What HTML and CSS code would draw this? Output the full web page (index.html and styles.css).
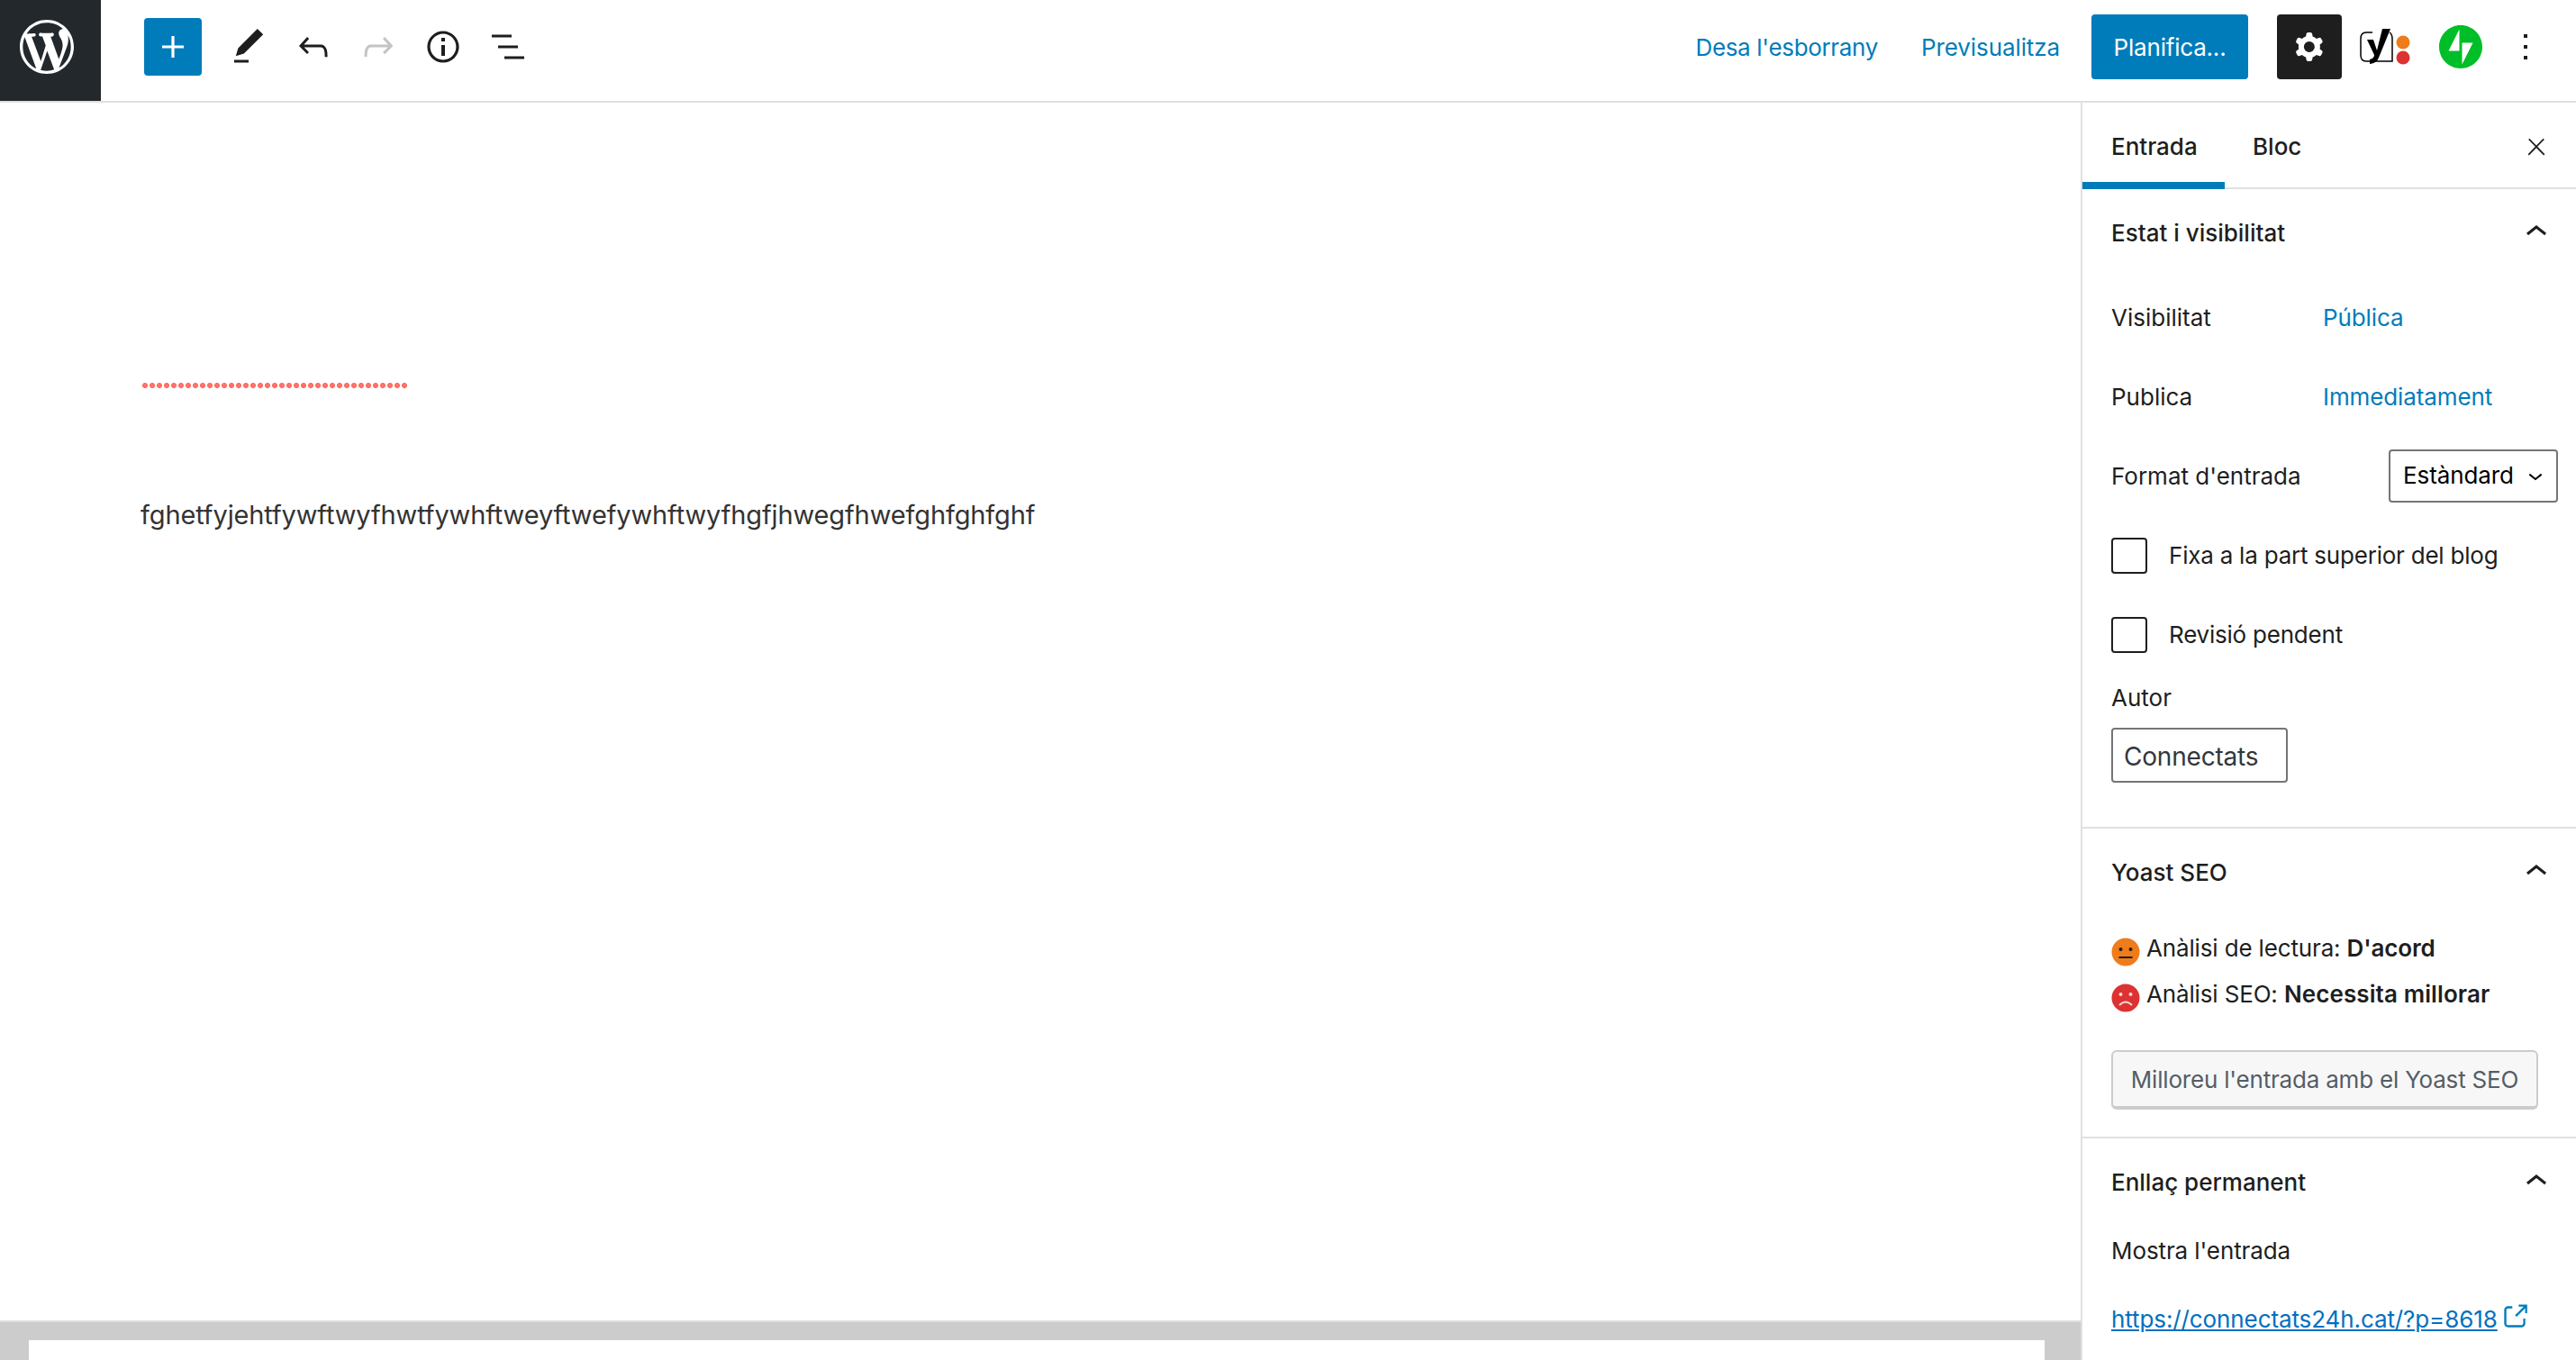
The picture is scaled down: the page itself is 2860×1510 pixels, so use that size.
FILE: index.html
```html
<!DOCTYPE html>
<html lang="ca">
<head>
<meta charset="utf-8">
<title>Editor</title>
<link rel="stylesheet" href="styles.css">
</head>
<body>
<header class="topbar">
  <a class="wp-logo"><svg viewBox="0 0 20 20" class="logo-svg"><path fill="#fff" d="M20 10c0-5.51-4.49-10-10-10C4.48 0 0 4.49 0 10c0 5.52 4.48 10 10 10 5.51 0 10-4.48 10-10zM7.78 15.37L4.37 6.22c.55-.02 1.17-.08 1.17-.08.5-.06.44-1.13-.06-1.11 0 0-1.45.11-2.37.11-.18 0-.37 0-.58-.01C4.12 2.69 6.87 1.11 10 1.11c2.33 0 4.45.87 6.05 2.34-.68-.11-1.65.39-1.65 1.58 0 .74.45 1.36.9 2.1.35.61.55 1.36.55 2.46 0 1.49-1.4 5-1.4 5l-3.03-8.37c.54-.02.82-.17.82-.17.5-.05.44-1.25-.06-1.22 0 0-1.44.12-2.38.12-.87 0-2.33-.12-2.33-.12-.5-.03-.56 1.2-.06 1.22l.92.08 1.26 3.41zM17.41 10c.24-.64.74-1.87.43-4.25.7 1.29 1.05 2.71 1.05 4.25 0 3.29-1.73 6.24-4.4 7.78.97-2.59 1.94-5.2 2.92-7.78zM6.1 18.09C3.12 16.65 1.11 13.53 1.11 10c0-1.3.23-2.48.72-3.59C3.25 10.3 4.67 14.2 6.1 18.09zm4.03-6.63l2.58 6.98c-.86.29-1.76.45-2.71.45-.79 0-1.57-.11-2.29-.33.81-2.38 1.62-4.74 2.42-7.1z"/></svg></a>
  <div class="tools">
    <button class="inserter"><svg viewBox="0 0 24 24" class="icon"><path fill="#fff" d="M18 11.2h-5.2V6h-1.6v5.2H6v1.6h5.2V18h1.6v-5.2H18z"/></svg></button>
    <button class="tool"><svg viewBox="0 0 24 24" class="icon"><path d="M20.1 5.1L16.9 2 6.2 12.7l-1.3 4.4 4.5-1.3L20.1 5.1zM4 20.8h8v-1.5H4v1.5z"/></svg></button>
    <button class="tool"><svg viewBox="0 0 24 24" class="icon"><path d="M18.3 11.7c-.6-.6-1.4-.9-2.3-.9H6.7l2.9-3.3-1.1-1-4.5 5L8.5 16l1-1-2.7-2.7H16c.5 0 .9.2 1.3.5 1 1 1 3.4 1 4.5v.3h1.5v-.2c0-1.5 0-4.3-1.5-5.7z"/></svg></button>
    <button class="tool is-disabled"><svg viewBox="0 0 24 24" class="icon"><path d="M15.6 6.5l-1.1 1 2.9 3.3H8c-.9 0-1.7.3-2.3.9-1.4 1.5-1.4 4.2-1.4 5.6v.2h1.5v-.3c0-1.1 0-3.5 1-4.5.3-.3.7-.5 1.3-.5h9.2L14.5 15l1.1 1.1 4.6-4.6-4.6-5z"/></svg></button>
    <button class="tool"><svg viewBox="0 0 24 24" class="icon"><path d="M12 3.2c-4.8 0-8.8 3.9-8.8 8.8 0 4.8 3.9 8.8 8.8 8.8 4.8 0 8.8-3.9 8.8-8.8 0-4.8-4-8.8-8.8-8.8zm0 16c-4 0-7.2-3.3-7.2-7.2C4.8 8 8 4.8 12 4.8s7.2 3.3 7.2 7.2c0 4-3.2 7.2-7.2 7.2zM11 17h2v-6h-2v6zm0-8h2V7h-2v2z"/></svg></button>
    <button class="tool"><svg viewBox="0 0 24 24" class="icon"><path d="M3 5.25h11v1.5H3zM6.5 11.25h11v1.5h-11zM10 17.25h11v1.5H10z"/></svg></button>
  </div>
  <div class="actions">
    <a class="link-btn link-draft">Desa l'esborrany</a>
    <a class="link-btn link-preview">Previsualitza</a>
    <button class="publish">Planifica...</button>
    <button class="settings"><svg viewBox="0 0 24 24" class="icon"><path fill="#fff" fill-rule="evenodd" d="M10.289 4.836A1 1 0 0111.275 4h1.306a1 1 0 01.987.836l.244 1.466c.787.26 1.503.679 2.108 1.218l1.393-.522a1 1 0 011.216.437l.653 1.13a1 1 0 01-.23 1.273l-1.148.944a6.025 6.025 0 010 2.435l1.149.946a1 1 0 01.23 1.272l-.653 1.13a1 1 0 01-1.216.437l-1.394-.522c-.605.54-1.32.958-2.108 1.218l-.244 1.466a1 1 0 01-.987.836h-1.306a1 1 0 01-.986-.836l-.244-1.466a5.995 5.995 0 01-2.108-1.218l-1.394.522a1 1 0 01-1.217-.436l-.653-1.131a1 1 0 01.23-1.272l1.149-.946a6.026 6.026 0 010-2.435l-1.148-.944a1 1 0 01-.23-1.272l.653-1.131a1 1 0 011.217-.437l1.393.522a5.994 5.994 0 012.108-1.218l.244-1.466zM14.929 12a3 3 0 11-6 0 3 3 0 016 0z"/></svg></button>
    <svg viewBox="0 0 58 42" class="yoast">
      <path d="M14 5H7Q1 5 1 12V30Q1 37 7 37H36V12Q36 7 33 5" fill="none" stroke="#000" stroke-width="1.5"/>
      <path d="M8 13h7l4 12L25 1h9L21 33q-2 6-10 7v-5q5-1 5-5L8 13z" fill="#000"/>
      <circle cx="48" cy="16" r="7.5" fill="#ee7c1b"/>
      <circle cx="48" cy="33" r="7.5" fill="#dc3232"/>
    </svg>
    <svg viewBox="0 0 32 32" class="jetpack"><path fill="#00be28" d="M16 0C7.2 0 0 7.2 0 16s7.2 16 16 16 16-7.2 16-16S24.8 0 16 0zM15 19H7l8-16v16zM17 29V13h8L17 29z"/></svg>
    <button class="more"><svg viewBox="0 0 24 24" class="icon"><path d="M13 19h-2v-2h2v2zm0-6h-2v-2h2v2zm0-6h-2V5h2v2z"/></svg></button>
  </div>
</header>
<div class="workspace">
  <main class="main">
    <div class="editor">
      <div class="title-squiggle"></div>
      <p class="paragraph">fghetfyjehtfywftwyfhwtfywhftweyftwefywhftwyfhgfjhwegfhwefghfghfghf</p>
    </div>
    <div class="metabox"><div class="metabox-inner"></div></div>
  </main>
  <aside class="sidebar">
    <div class="tabs">
      <div class="tab is-active">Entrada</div>
      <div class="tab tab-block">Bloc</div>
      <button class="close"><svg viewBox="0 0 24 24" class="close-icon"><path d="M13 11.8l6.1-6.3-1-1-6.1 6.2-6.1-6.2-1 1 6.1 6.3-6.5 6.7 1 1 6.5-6.6 6.5 6.6 1-1z"/></svg></button>
    </div>
    <section class="panel panel-status">
      <div class="panel-head"><span class="panel-title">Estat i visibilitat</span><svg viewBox="0 0 24 24" class="icon"><path d="M6.5 12.4L12 8l5.5 4.4-.9 1.2L12 10l-4.5 3.6-1-1.2z"/></svg></div>
      <div class="row"><span class="row-label">Visibilitat</span><a class="row-link">Pública</a></div>
      <div class="row"><span class="row-label">Publica</span><a class="row-link">Immediatament</a></div>
      <div class="row row-between"><span>Format d'entrada</span><div class="select">Estàndard<svg viewBox="0 0 24 24" class="select-chev"><path d="M17.5 11.6L12 16l-5.5-4.4.9-1.2L12 14l4.5-3.6 1 1.2z"/></svg></div></div>
      <label class="row check"><input type="checkbox" class="checkbox"><span>Fixa a la part superior del blog</span></label>
      <label class="row check"><input type="checkbox" class="checkbox"><span>Revisió pendent</span></label>
      <div class="author-label">Autor</div>
      <div class="author-input">Connectats</div>
    </section>
    <section class="panel panel-yoast">
      <div class="panel-head"><span class="panel-title">Yoast SEO</span><svg viewBox="0 0 24 24" class="icon"><path d="M6.5 12.4L12 8l5.5 4.4-.9 1.2L12 10l-4.5 3.6-1-1.2z"/></svg></div>
      <div class="score">
        <svg viewBox="0 0 32 32" class="face"><circle cx="16" cy="16" r="15.5" fill="#ee7c1b"/><circle cx="10.5" cy="13" r="2" fill="#1e1e1e"/><circle cx="21.5" cy="13" r="2" fill="#1e1e1e"/><rect x="8.5" y="21" width="15" height="2" fill="#1e1e1e"/></svg>
        <span class="score-text">Anàlisi de lectura: <b>D'acord</b></span>
      </div>
      <div class="score">
        <svg viewBox="0 0 32 32" class="face"><circle cx="16" cy="16" r="15.5" fill="#dc3232"/><circle cx="10.5" cy="12" r="2" fill="#f6d5d5"/><circle cx="21.5" cy="12" r="2" fill="#f6d5d5"/><path d="M9 24q7-7 14 0" fill="none" stroke="#f6d5d5" stroke-width="2"/></svg>
        <span class="score-text">Anàlisi SEO: <b class="score-wide">Necessita millorar</b></span>
      </div>
      <button class="yoast-btn">Milloreu l'entrada amb el Yoast SEO</button>
    </section>
    <section class="panel panel-link">
      <div class="panel-head"><span class="panel-title">Enllaç permanent</span><svg viewBox="0 0 24 24" class="icon"><path d="M6.5 12.4L12 8l5.5 4.4-.9 1.2L12 10l-4.5 3.6-1-1.2z"/></svg></div>
      <div class="show-label">Mostra l'entrada</div>
      <div class="permalink"><a class="perma-url">https://connectats24h.cat/?p=8618</a><svg viewBox="0 0 24 24" class="ext"><path d="M18.2 17c0 .7-.6 1.2-1.2 1.2H7c-.7 0-1.2-.6-1.2-1.2V7c0-.7.6-1.2 1.2-1.2h3.2V4.2H7C5.5 4.2 4.2 5.5 4.2 7v10c0 1.5 1.2 2.8 2.8 2.8h10c1.5 0 2.8-1.2 2.8-2.8v-3.6h-1.5V17zM14.9 3v1.5h3.7l-6.4 6.4 1.1 1.1 6.4-6.4v3.7h1.5V3h-6.3z"/></svg></div>
    </section>
  </aside>
</div>
</body>
</html>
```
FILE: styles.css
```css
* { box-sizing: border-box; }
html, body { margin: 0; height: 100%; }
body {
  height: 1510px;
  overflow: hidden;
  display: flex;
  flex-direction: column;
  background: #fff;
  color: #1e1e1e;
  font-family: Inter, "Liberation Sans", sans-serif;
  font-size: 26px;
  line-height: 40px;
}
button {
  border: 0;
  padding: 0;
  margin: 0;
  background: none;
  font: inherit;
  color: inherit;
  display: flex;
  align-items: center;
  justify-content: center;
}
.icon { width: 48px; height: 48px; display: block; fill: #1e1e1e; }

.topbar {
  flex: none;
  height: 114px;
  display: flex;
  align-items: flex-start;
  border-bottom: 2px solid #e0e0e0;
}
.wp-logo {
  width: 112px;
  height: 112px;
  padding: 22px 30px 30px 22px;
  background: #23282d;
  flex: none;
}
.logo-svg { width: 60px; height: 60px; display: block; }
.tools {
  display: flex;
  align-items: center;
  height: 104px;
  padding-left: 48px;
}
.inserter {
  width: 64px;
  height: 64px;
  background: #007cba;
  border-radius: 4px;
  margin-right: 28px;
}
.tool { width: 48px; height: 48px; margin-right: 24px; }
.tool.is-disabled .icon { fill: #c4c4c4; }
.actions {
  margin-left: auto;
  display: flex;
  align-items: center;
  height: 104px;
}
.link-btn { color: #007cba; white-space: nowrap; letter-spacing: -0.1px; padding-top: 2px; }
.link-draft { margin-right: 48px; letter-spacing: -0.33px; }
.link-preview { margin-right: 35px; }
.publish {
  width: 174px;
  height: 72px;
  padding-top: 2px;
  background: #007cba;
  color: #fff;
  border-radius: 4px;
  margin-right: 32px;
  letter-spacing: -0.2px;
}
.settings {
  width: 72px;
  height: 72px;
  background: #1e1e1e;
  border-radius: 4px;
  margin-right: 20px;
}
.yoast { width: 58px; height: 42px; display: block; margin-right: 30px; }
.jetpack { width: 48px; height: 48px; display: block; margin-right: 24px; }
.more { width: 48px; height: 48px; margin-right: 32px; }

.workspace { flex: 1; display: flex; min-height: 0; }
.main { flex: 1; display: flex; flex-direction: column; min-width: 0; }
.editor { flex: 1; padding: 311px 0 0 156px; }
.title-squiggle {
  width: 296px;
  height: 6px;
  margin-left: 2px;
  background-image: radial-gradient(circle at 3px 3px, #ff7a70 0, #ff6a60 2.6px, rgba(255,120,110,0) 3.4px);
  background-size: 8px 6px;
  background-repeat: repeat-x;
}
.paragraph {
  margin: 117px 0 0;
  font-size: 29px;
  letter-spacing: -0.13px;
  line-height: 48px;
  color: #333;
}
.metabox {
  flex: none;
  height: 44px;
  border-top: 2px solid #e0e0e0;
  background: #ccc;
  padding: 20px 0 0 32px;
}
.metabox-inner { width: 2238px; height: 22px; background: #fff; }

.sidebar {
  flex: none;
  width: 550px;
  border-left: 2px solid #e0e0e0;
  overflow: hidden;
}
.tabs {
  height: 96px;
  display: flex;
  border-bottom: 2px solid #e0e0e0;
}
.tab {
  height: 96px;
  padding: 29px 32px 0;
  font-weight: 500;
}
.tab.is-active { border-bottom: 8px solid #007cba; width: 158px; }
.tab-block { padding-left: 31px; }
.close { width: 48px; height: 48px; margin: 25px 20px 0 auto; }
.close-icon { width: 30px; height: 30px; display: block; fill: #1e1e1e; }

.panel { padding: 0 20px 0 32px; border-bottom: 2px solid #e0e0e0; }
.panel-head {
  height: 96px;
  display: flex;
  align-items: center;
  justify-content: space-between;
  font-weight: 500;
}
.panel-title { padding-top: 2px; }
.panel-status { height: 710px; }
.panel-status .panel-head + .row { margin-top: 3px; }
.row { height: 88px; display: flex; align-items: center; }
.row-label { width: 235px; }
.row-link { color: #007cba; letter-spacing: -0.1px; }
.row-between { justify-content: space-between; }
.select {
  width: 188px;
  height: 59px;
  margin-top: -2px;
  border: 2px solid #757575;
  border-radius: 4px;
  padding-left: 14px;
  display: flex;
  align-items: center;
  color: #000;
  letter-spacing: -0.1px;
}
.select-chev { width: 32px; height: 32px; margin-left: 8px; display: block; flex: none; }
.checkbox {
  appearance: none;
  width: 40px;
  height: 40px;
  margin: 0 24px 0 0;
  border: 2px solid #1e1e1e;
  border-radius: 4px;
  background: #fff;
  flex: none;
}
.check span { letter-spacing: -0.22px; }
.author-label { margin-top: 6px; }
.author-input {
  width: 196px;
  height: 61px;
  margin-top: 13px;
  border: 2px solid #757575;
  border-radius: 4px;
  padding: 2px 0 0 12px;
  display: flex;
  align-items: center;
  font-size: 28px;
  letter-spacing: -0.2px;
  color: #32373c;
}
.panel-yoast { height: 344px; }
.panel-yoast .panel-head + .score { margin-top: 15px; }
.score { height: 51px; display: flex; align-items: center; }
.face { width: 32px; height: 32px; display: block; margin-right: 7px; flex: none; }
.score-text { margin-top: -8px; letter-spacing: -0.15px; }
.score-text b { font-weight: 600; }
.score-text .score-wide { letter-spacing: 0.1px; }
.yoast-btn {
  width: 474px;
  height: 66px;
  margin-top: 33px;
  padding-top: 2px;
  background: #f7f7f7;
  border: 2px solid #ccc;
  border-bottom-width: 4px;
  border-radius: 6px;
  color: #555d66;
  letter-spacing: -0.2px;
}
.panel-link { border-bottom: 0; }
.show-label { margin-top: 9px; letter-spacing: -0.1px; }
.permalink { margin-top: 36px; display: flex; align-items: center; }
.perma-url { color: #0070c0; text-decoration: underline; letter-spacing: -0.1px; }
.ext { width: 36px; height: 36px; display: block; fill: #007cba; margin: -6px 0 0 1px; flex: none; }
```
